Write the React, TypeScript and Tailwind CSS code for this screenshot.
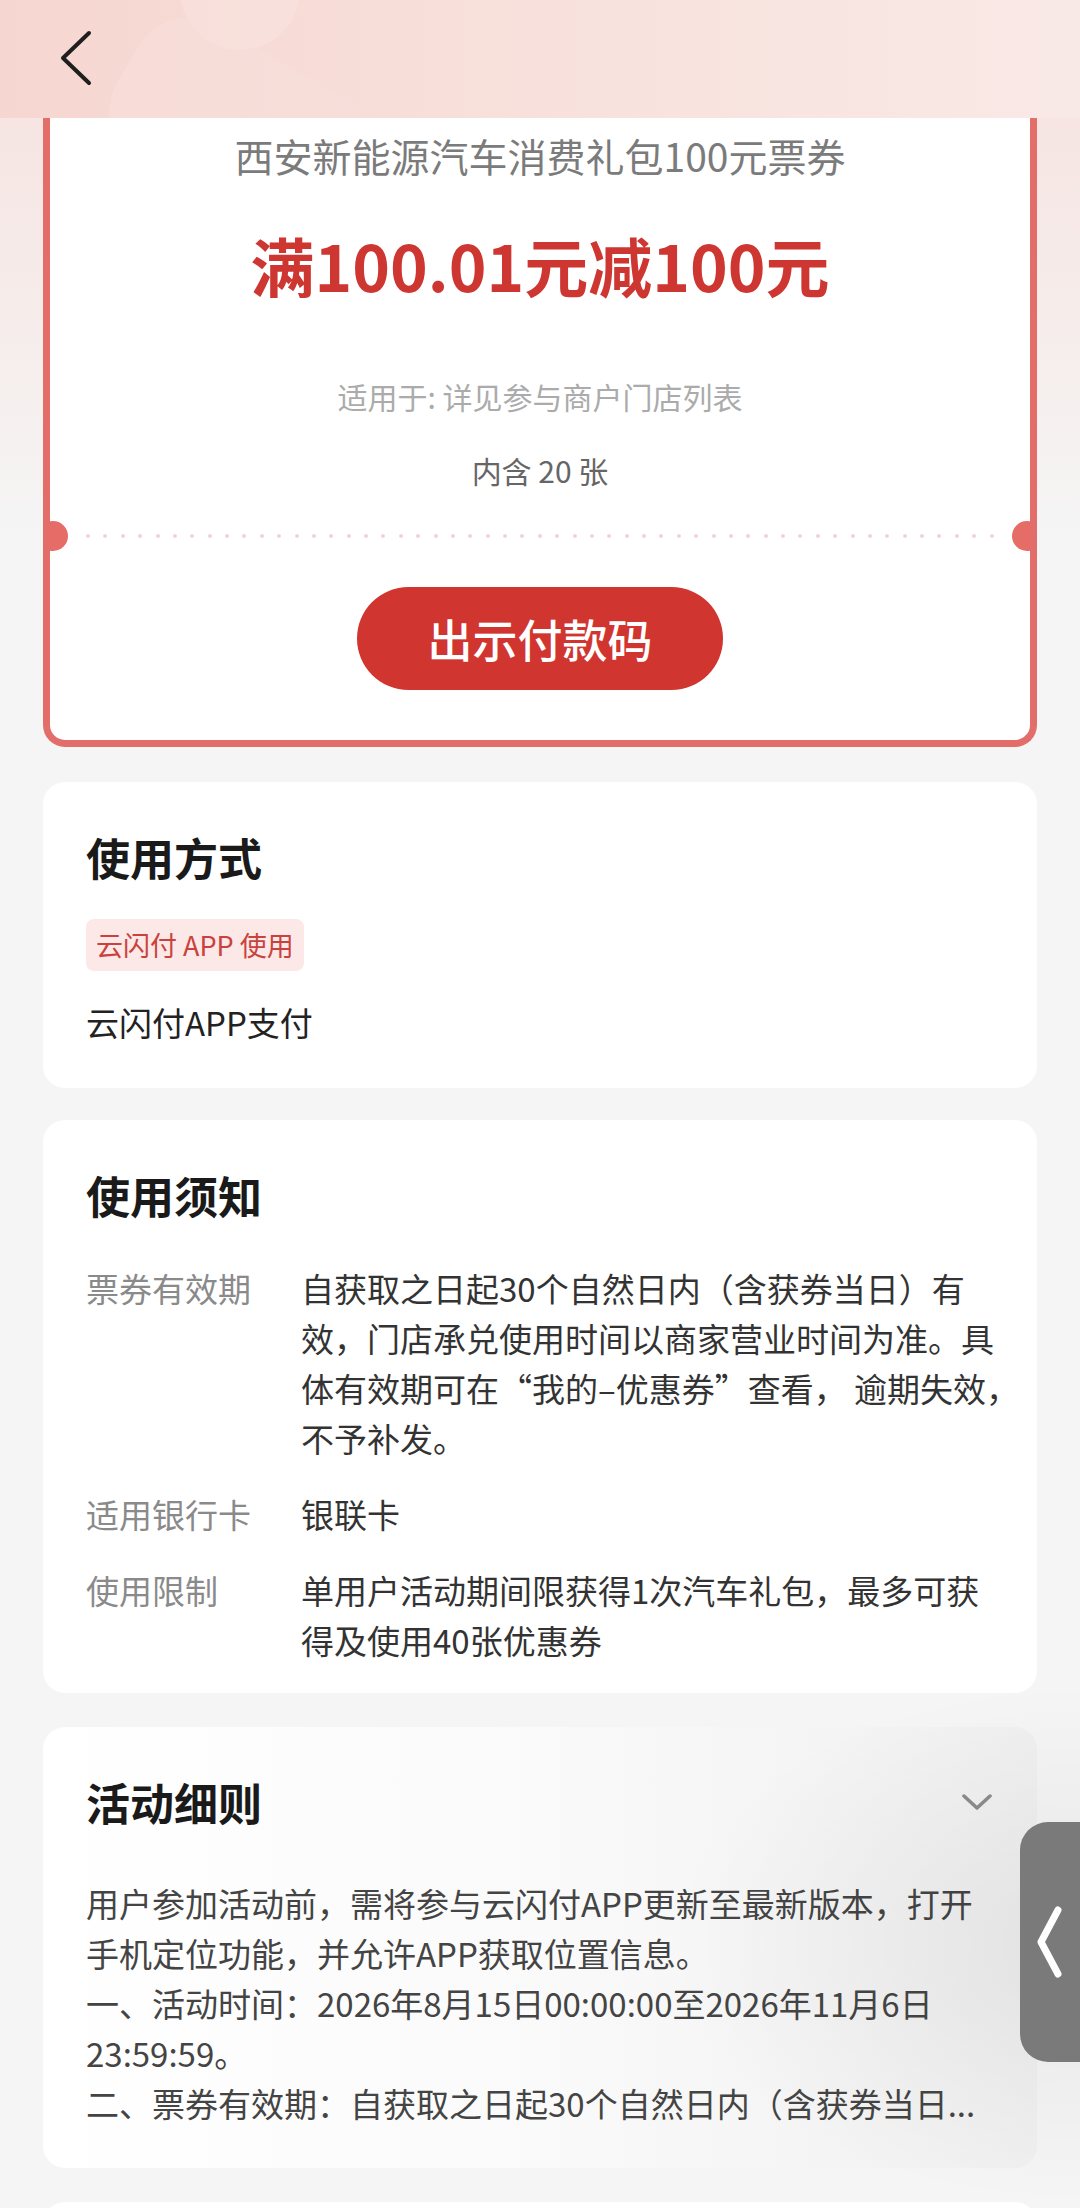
import React from "react";

const notes = [
  {
    label: "票券有效期",
    lines: [
      "自获取之日起30个自然日内（含获券当日）有",
      "效，门店承兑使用时间以商家营业时间为准。具",
      "体有效期可在“我的–优惠券”查看， 逾期失效，",
      "不予补发。",
    ],
  },
  { label: "适用银行卡", lines: ["银联卡"] },
  {
    label: "使用限制",
    lines: ["单用户活动期间限获得1次汽车礼包，最多可获", "得及使用40张优惠券"],
  },
];

const rules = [
  "用户参加活动前，需将参与云闪付APP更新至最新版本，打开",
  "手机定位功能，并允许APP获取位置信息。",
  "一、活动时间：2026年8月15日00:00:00至2026年11月6日",
  "23:59:59。",
  "二、票券有效期：自获取之日起30个自然日内（含获券当日...",
];

const dots = Array.from({ length: 53 });

const App = () => {
  return (
    <div className="relative w-[1080px] min-h-screen overflow-hidden bg-[#f5f5f5] font-['Noto_Sans_CJK_SC',sans-serif]">
      {/* header */}
      <div className="relative h-[118px] overflow-hidden bg-gradient-to-r from-[#f6d6d0] via-[#f8e1dc] to-[#f9e9e6]">
        <div className="absolute left-[180px] top-[-70px] h-[120px] w-[120px] rounded-full bg-[#f9e3df] opacity-60" />
        <div className="absolute left-[110px] top-[50px] h-[160px] w-[260px] rotate-[30deg] rounded-[60px] bg-[#f8e0dc] opacity-50" />
        <button className="absolute left-[58px] top-[30px] h-[56px] w-[36px]">
          <svg width="36" height="56" viewBox="0 0 36 56" fill="none">
            <path d="M31 3 L5 28 L31 53" stroke="#1f1f1f" strokeWidth="4" strokeLinecap="round" strokeLinejoin="round" />
          </svg>
        </button>
      </div>

      <div className="bg-gradient-to-b from-[#f6e5e2] to-[#f5f5f5] to-[18%] px-[43px] pb-[60px]">
        {/* coupon */}
        <div className="relative overflow-hidden rounded-b-[22px] border-x-[7px] border-b-[7px] border-[#e36d68] bg-white">
          <div className="flex flex-col items-center">
            <div className="mt-[13px] text-[39px] leading-[48px] text-[#7b7b7b]">西安新能源汽车消费礼包100元票券</div>
            <div className="mt-[45px] text-[64px] font-bold leading-[80px] text-[#cd3631]">满100.01元减100元</div>
            <div className="mt-[72px] text-[30px] leading-[40px] text-[#ababab]">适用于: 详见参与商户门店列表</div>
            <div className="mt-[34px] text-[30px] leading-[40px] text-[#666666]">内含 20 张</div>
          </div>

          <div className="relative mt-[31px] flex h-[30px] items-center justify-between px-[36px]">
            <div className="absolute left-[-12px] top-0 h-[30px] w-[30px] rounded-full bg-[#e66d67]" />
            {dots.map((_, i) => (
              <span key={i} className="h-[4px] w-[4px] rounded-full bg-[#efd4d2]" />
            ))}
            <div className="absolute right-[-12px] top-0 h-[30px] w-[30px] rounded-full bg-[#e66d67]" />
          </div>

          <div className="flex justify-center pb-[50px] pt-[36px]">
            <button className="flex h-[103px] w-[366px] items-center justify-center rounded-full bg-[#d13530] text-[45px] font-medium text-white">
              出示付款码
            </button>
          </div>
        </div>

        {/* usage */}
        <div className="mt-[35px] rounded-[22px] bg-white px-[43px] pb-[44px] pt-[47px]">
          <div className="text-[44px] font-semibold leading-[56px] text-[#1a1a1a]">使用方式</div>
          <div className="mt-[34px] inline-flex h-[52px] items-center rounded-[8px] bg-[#fde8e8] px-[10px] text-[27px] text-[#c9433e]">
            云闪付 APP 使用
          </div>
          <div className="mt-[29px] text-[33px] leading-[44px] text-[#222222]">云闪付APP支付</div>
        </div>

        {/* notes */}
        <div className="mt-[32px] rounded-[22px] bg-white px-[43px] pb-[28px] pt-[47px]">
          <div className="text-[44px] font-semibold leading-[56px] text-[#1a1a1a]">使用须知</div>
          <div className="mt-[40px] flex flex-col gap-[26px]">
            {notes.map((n) => (
              <div key={n.label} className="grid grid-cols-[215px_1fr] text-[33px] leading-[50px]">
                <div className="text-[#8a8a8a]">{n.label}</div>
                <div className="text-[#333333]">
                  {n.lines.map((l) => (
                    <div key={l} className="whitespace-nowrap">{l}</div>
                  ))}
                </div>
              </div>
            ))}
          </div>
        </div>

        {/* rules */}
        <div className="mt-[34px] rounded-[22px] bg-gradient-to-r from-white via-[#fafafa] to-[#f0f0f0] px-[43px] pb-[40px] pt-[47px]">
          <div className="flex items-center justify-between">
            <div className="text-[44px] font-semibold leading-[56px] text-[#1a1a1a]">活动细则</div>
            <svg width="30" height="18" viewBox="0 0 30 18" fill="none" className="mr-[2px]">
              <path d="M2 3 L15 15 L28 3" stroke="#8c8c8c" strokeWidth="3.5" strokeLinecap="round" strokeLinejoin="round" />
            </svg>
          </div>
          <div className="mt-[48px] text-[33px] leading-[50px] text-[#444444]">
            {rules.map((l) => (
              <div key={l} className="whitespace-nowrap">{l}</div>
            ))}
          </div>
        </div>

        <div className="mt-[34px] h-[200px] rounded-[22px] bg-white" />
      </div>

      {/* soft shade near side tab */}
      <div className="pointer-events-none absolute right-0 top-[1680px] h-[528px] w-[420px] bg-[radial-gradient(ellipse_at_right,rgba(0,0,0,0.06),transparent_70%)]" />

      {/* floating side tab */}
      <div className="absolute right-0 top-[1822px] flex h-[240px] w-[60px] items-center justify-center rounded-l-[28px] bg-[#7a7a7a]">
        <svg width="28" height="72" viewBox="0 0 28 72" fill="none">
          <path d="M22 4 L5 36 L22 68" stroke="#ffffff" strokeWidth="7" strokeLinecap="round" strokeLinejoin="round" />
        </svg>
      </div>
    </div>
  );
};

export default App;
